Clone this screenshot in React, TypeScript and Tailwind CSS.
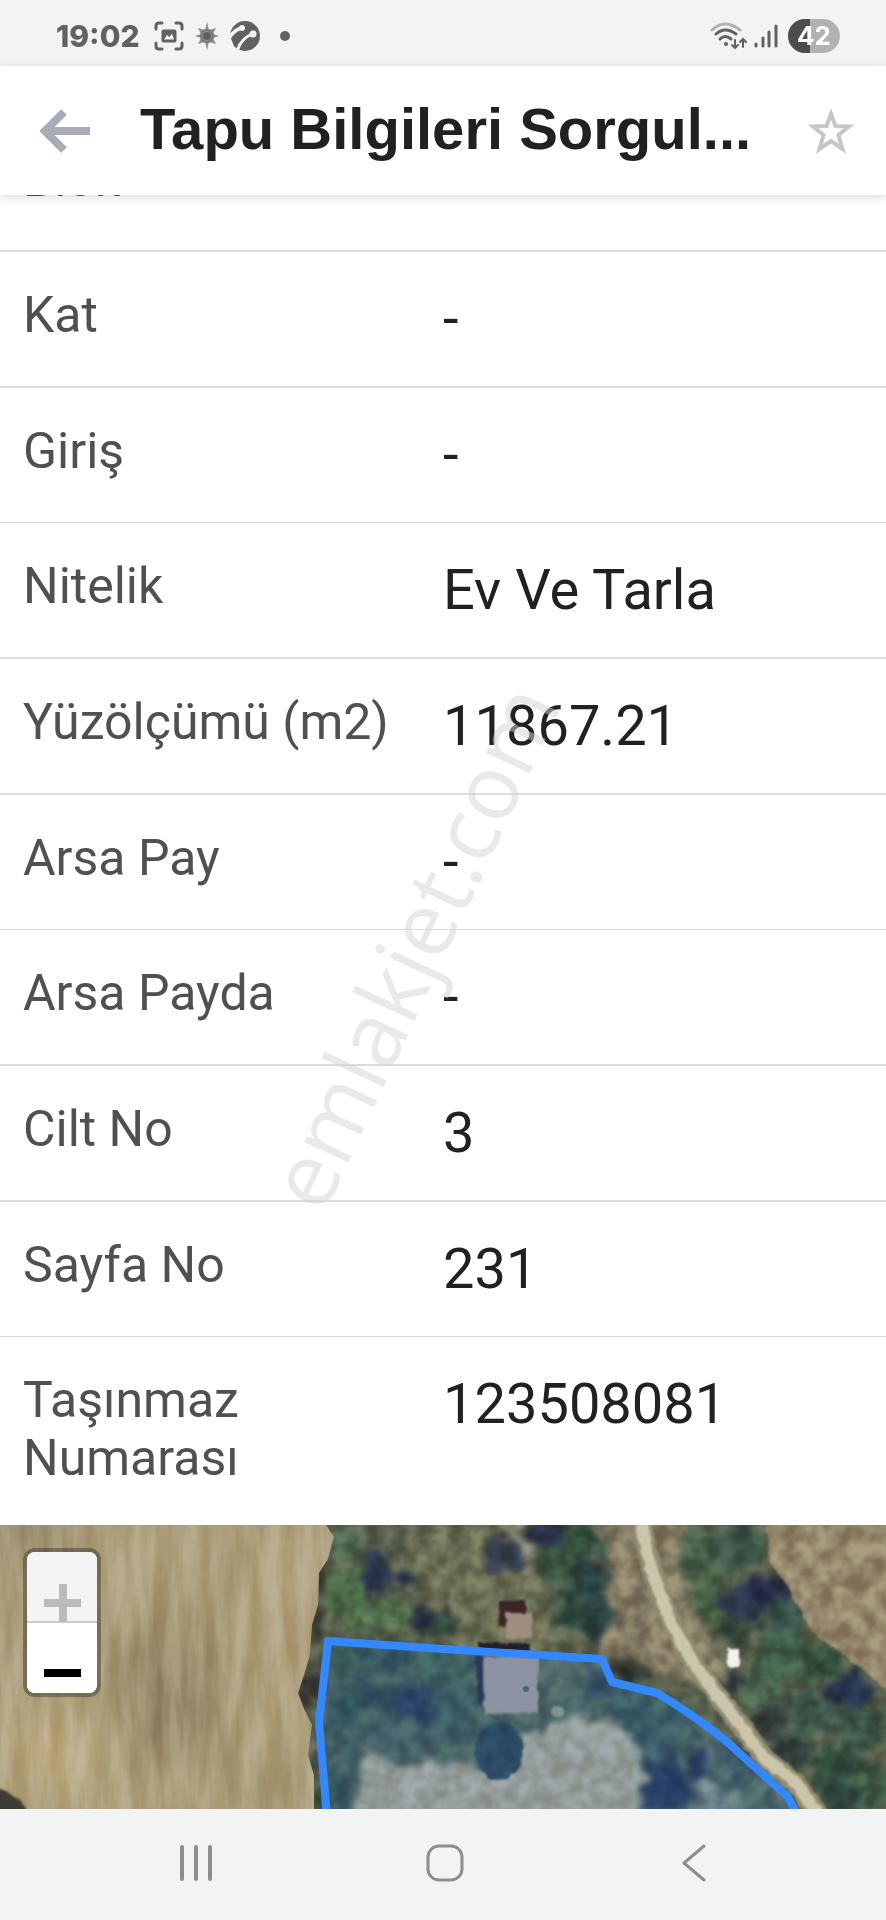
interface Row {
  label: string
  value: string
}

const rows: Row[] = [
  { label: 'Blok', value: '' },
  { label: 'Kat', value: '-' },
  { label: 'Giriş', value: '-' },
  { label: 'Nitelik', value: 'Ev Ve Tarla' },
  { label: 'Yüzölçümü (m2)', value: '11867.21' },
  { label: 'Arsa Pay', value: '-' },
  { label: 'Arsa Payda', value: '-' },
  { label: 'Cilt No', value: '3' },
  { label: 'Sayfa No', value: '231' },
  { label: 'Taşınmaz Numarası', value: '123508081' },
]

// [cx, cy, rx, ry, fill]
type Blob = [number, number, number, number, string]

const trees: Blob[] = [
  [345, 20, 16, 18, '#4d6650'],
  [348, 70, 22, 26, '#4a6a45'],
  [375, 48, 14, 24, '#28344c'],
  [402, 56, 12, 9, '#28344c'],
  [420, 95, 12, 14, '#25303f'],
  [405, 9, 6, 5, '#2f3834'],
  [365, 98, 22, 12, '#547050'],
  [395, 88, 18, 14, '#52704a'],
  [445, 98, 14, 14, '#34483c'],
  [505, 32, 20, 18, '#343e4c'],
  [548, 10, 20, 18, '#2a3146'],
  [580, 14, 22, 20, '#35503f'],
  [565, 42, 26, 22, '#37523f'],
  [590, 55, 20, 26, '#2c4444'],
  [572, 85, 20, 20, '#30483e'],
  [598, 95, 18, 20, '#2b4240'],
  [322, 55, 5, 22, '#3a332f'],
  [318, 100, 8, 22, '#37352f'],
  [312, 165, 14, 18, '#33322f'],
  [316, 240, 6, 16, '#3a4636'],
  [318, 270, 7, 16, '#3c5038'],
  [700, 30, 22, 30, '#48604a'],
  [738, 20, 26, 28, '#3d5446'],
  [712, 75, 20, 26, '#4a6346'],
  [770, 68, 24, 16, '#272c49'],
  [740, 82, 22, 20, '#2a3548'],
  [785, 92, 24, 16, '#38534a'],
  [735, 105, 14, 14, '#324438'],
  [785, 130, 28, 24, '#3f5e48'],
  [760, 165, 20, 22, '#4a6650'],
  [820, 138, 22, 18, '#34503c'],
  [850, 165, 24, 18, '#27334a'],
  [770, 195, 18, 16, '#333a3a'],
  [810, 190, 26, 22, '#3b5346'],
  [860, 205, 26, 22, '#3c5647'],
  [790, 225, 20, 16, '#323f3c'],
  [835, 240, 28, 20, '#33503f'],
  [875, 262, 22, 24, '#3f5c45'],
  [840, 272, 22, 14, '#2a3f3a'],
  [732, 158, 8, 12, '#232a33'],
  [630, 140, 26, 9, '#33362f'],
  [640, 152, 20, 8, '#2e3433'],
]

const parcelTrees: Blob[] = [
  [350, 135, 22, 18, '#3d5532'],
  [395, 130, 32, 14, '#33483a'],
  [440, 140, 34, 18, '#40583a'],
  [380, 170, 30, 18, '#303e34'],
  [420, 178, 26, 18, '#283440'],
  [345, 190, 20, 20, '#344c38'],
  [455, 180, 26, 20, '#3f5540'],
  [350, 225, 12, 26, '#44573f'],
  [340, 262, 12, 22, '#364a36'],
  [395, 208, 36, 12, '#485744'],
  [450, 212, 26, 12, '#445140'],
  [560, 150, 26, 22, '#576448'],
  [600, 160, 10, 20, '#343f40'],
  [630, 178, 24, 18, '#3d533f'],
  [655, 205, 30, 22, '#3b4f41'],
  [675, 190, 22, 16, '#425744'],
  [648, 232, 16, 18, '#425545'],
  [665, 262, 24, 28, '#242e40'],
  [699, 245, 9, 17, '#262c3a'],
  [720, 225, 20, 14, '#4f5a4a'],
  [735, 262, 30, 16, '#526148'],
  [745, 240, 18, 12, '#3b493f'],
]

function Blobs({ items }: { items: Blob[] }) {
  return (
    <>
      {items.map(([cx, cy, rx, ry, fill], i) => (
        <ellipse key={i} cx={cx} cy={cy} rx={rx} ry={ry} fill={fill} />
      ))}
    </>
  )
}

const parcel = 'M327 292L319 197L328 116L443 124L602 134L612 157L657 168Q694 190 725 215L788 272L798 292'
const road = 'M641 -6Q648 42 667 88Q684 128 711 162L744 205L764 233L794 256L820 292'

function SatelliteMap() {
  return (
    <svg viewBox="0 0 886 284" preserveAspectRatio="xMidYMid slice" className="absolute inset-0 w-full h-full" aria-hidden="true">
      <defs>
        <filter id="rough" x="-5%" y="-5%" width="110%" height="110%" colorInterpolationFilters="sRGB">
          <feTurbulence type="fractalNoise" baseFrequency="0.06" numOctaves="3" seed="4" result="n" />
          <feDisplacementMap in="SourceGraphic" in2="n" scale="30" xChannelSelector="R" yChannelSelector="G" />
          <feGaussianBlur stdDeviation="3" />
        </filter>
        <filter id="edge" colorInterpolationFilters="sRGB">
          <feTurbulence type="fractalNoise" baseFrequency="0.12" numOctaves="2" seed="9" result="n" />
          <feDisplacementMap in="SourceGraphic" in2="n" scale="5" xChannelSelector="R" yChannelSelector="G" />
          <feGaussianBlur stdDeviation="1" />
        </filter>
        <filter id="grain" x="0" y="0" width="100%" height="100%" colorInterpolationFilters="sRGB">
          <feTurbulence type="fractalNoise" baseFrequency="0.06" numOctaves="3" seed="2" />
          <feColorMatrix values="2.4 0 0 0 -0.7  2.4 0 0 0 -0.7  2.4 0 0 0 -0.7  0 0 0 0 1" />
          <feGaussianBlur stdDeviation="1" />
        </filter>
        <filter id="streaks" x="0" y="0" width="100%" height="100%" colorInterpolationFilters="sRGB">
          <feTurbulence type="fractalNoise" baseFrequency="0.06 0.01" numOctaves="4" seed="7" />
          <feColorMatrix values="2.2 0 0 0 -0.6  2.2 0 0 0 -0.6  2.2 0 0 0 -0.6  0 0 0 0 1" />
        </filter>
        <filter id="soft">
          <feGaussianBlur stdDeviation="18" />
        </filter>
        <clipPath id="fieldClip">
          <path d="M0 0H326L334 12L328 34L319 48L318 80L312 100L310 130L304 150L298 168L304 184L312 200L308 230L314 250V284H0Z" />
        </clipPath>
      </defs>

      <rect width="886" height="284" fill="#5a624e" />

      <g filter="url(#rough)">
        <path d="M395 0H520L540 60L560 140H440L425 60Z" fill="#6c6e54" />
        <path d="M600 -10H680L700 90L730 150L700 160L600 130Z" fill="#857c64" />
        <path d="M495 -5L520 -5L535 45L525 50Z" fill="#8f8d7b" />
        <Blobs items={trees} />
      </g>

      {/* Right field */}
      <path d="M766 -5L770 38L790 65L813 108L860 142L890 168V-5Z" fill="#93866a" filter="url(#edge)" />

      {/* Parcel ground */}
      <g filter="url(#rough)">
        <path d="M328 122L602 138L612 160L657 172L725 219L785 284H327L321 200Z" fill="#4c5a3f" />
        <Blobs items={parcelTrees} />
        <path d="M362 220L400 240L443 236L480 240L535 206L560 190L600 190L628 210L648 245L640 295H358Z" fill="#aca282" />
        <path d="M700 262L730 262L750 290H690Z" fill="#77806a" />
      </g>
      <g filter="url(#edge)">
        <ellipse cx="499" cy="226" rx="24" ry="29" fill="#2b3d3f" />
        <circle cx="558" cy="186" r="6" fill="#9a9a88" />
      </g>

      <rect width="886" height="284" filter="url(#grain)" className="mix-blend-overlay opacity-20" />

      {/* Left field */}
      <g clipPath="url(#fieldClip)">
        <rect width="340" height="284" fill="#ac9e7b" />
        <g filter="url(#soft)">
          <ellipse cx="170" cy="170" rx="50" ry="80" fill="#988a6b" />
          <ellipse cx="60" cy="230" rx="50" ry="40" fill="#bba980" />
          <ellipse cx="285" cy="120" rx="20" ry="130" fill="#b3a17e" />
          <ellipse cx="20" cy="10" rx="60" ry="20" fill="#948769" />
        </g>
        <rect width="340" height="284" filter="url(#streaks)" className="mix-blend-overlay opacity-15" />
        <path d="M-5 262Q18 268 30 290H-5Z" fill="#3e3b35" filter="url(#edge)" />
      </g>

      {/* Road */}
      <g fill="none" filter="url(#edge)">
        <path d={road} stroke="#918b70" strokeWidth="20" />
        <path d={road} stroke="#cbc6ab" strokeWidth="12" />
      </g>

      {/* Buildings */}
      <g filter="url(#edge)">
        <path d="M499 76H526V90H508V102H499Z" fill="#3a2428" />
        <path d="M506 88H532V114H506Z" fill="#a08d80" />
        <path d="M478 118H530V128H478Z" fill="#231f26" />
        <path d="M475 130H483V178H478Z" fill="#232733" />
        <path d="M483 132H538V188L484 190Z" fill="#a3958a" />
        <path d="M727 124H739V142H728Z" fill="#f4f2ee" />
      </g>
      <circle cx="526" cy="164" r="3" fill="#5a5560" />

      <path d={parcel} fill="#3388ff" fillOpacity="0.2" stroke="#3388ff" strokeWidth="8" strokeLinejoin="round" />
    </svg>
  )
}

function StatusBar() {
  return (
    <div className="h-[66px] shrink-0 bg-[#f2f3f5] flex items-center justify-between pl-14 pr-[46px] pt-[6px]">
      <div className="flex items-center text-[#5f6163]">
        <span className="w-[98px] font-['Inter'] font-extrabold text-[30px] leading-[32px]">19:02</span>
        <svg width="30" height="30" viewBox="0 0 30 30" fill="none" stroke="currentColor" strokeWidth="3" strokeLinecap="round">
          <path d="M2 8V5Q2 2 5 2H8M22 2H25Q28 2 28 5V8M28 22V25Q28 28 25 28H22M8 28H5Q2 28 2 25V22" />
          <rect x="7.500" y="8.500" width="15" height="13" rx="2" fill="currentColor" stroke="none" />
          <path d="M10 18.500L13 14L15.500 16L18 12.500L20 18.500Z" fill="#f2f3f5" stroke="none" />
        </svg>
        <svg width="26" height="30" viewBox="0 0 26 30" className="ml-[10px]">
          <path d="M13 1L15 9L22 7L19 13L25 15L19 17L22 23L15 21L13 29L11 21L4 23L7 17L1 15L7 13L4 7L11 9Z" fill="#8d8f91" />
          <circle cx="13" cy="15" r="6" fill="none" stroke="#77797b" strokeWidth="2" />
          <circle cx="13" cy="15" r="4" fill="#5f6163" />
        </svg>
        <svg width="30" height="30" viewBox="0 0 30 30" className="ml-[10px]">
          <circle cx="15" cy="15" r="15" fill="currentColor" />
          <g fill="none" stroke="#f2f3f5" strokeLinecap="round">
            <path d="M-1 17Q3 10 11 7" strokeWidth="4" />
            <path d="M8 28Q11 18 22 13" strokeWidth="3" />
            <path d="M0 19L2 24" strokeWidth="3" />
          </g>
          <circle cx="12" cy="7" r="3" fill="#f2f3f5" />
          <circle cx="23" cy="13" r="3.500" fill="#f2f3f5" />
        </svg>
        <span className="ml-5 w-[10px] h-[10px] rounded-full bg-[#5f6163]" />
      </div>

      <div className="flex items-center">
        <svg width="38" height="30" viewBox="0 0 38 30" fill="none" strokeLinecap="round">
          <path d="M2 9Q15 -3 30 9" stroke="#b0b1b3" strokeWidth="3" />
          <path d="M6 13Q15 5 26 13M10 18Q15 13 21 18" stroke="#5f6163" strokeWidth="3" />
          <circle cx="16" cy="23" r="2" fill="#5f6163" />
          <path d="M25 19V27M22 24L25 27L28 24M33 26V18M30 21L33 18L36 21" stroke="#5f6163" strokeWidth="2" />
        </svg>
        <svg width="24" height="26" viewBox="0 0 24 26" className="ml-[6px]" stroke="#5f6163" strokeWidth="3" strokeLinecap="round">
          <path d="M2 21V23M9 15V23M15 9V23M22 3V23" />
        </svg>
        <div className="relative ml-[10px] w-[52px] h-[34px] rounded-full overflow-hidden bg-[#b0b1b3] flex items-center justify-center">
          <div className="absolute left-0 inset-y-0 w-[42%] bg-[#4b4d50]" />
          <span className="relative font-['Inter'] font-bold text-[26px] leading-[34px] text-white">42</span>
        </div>
      </div>
    </div>
  )
}

export default function App() {
  return (
    <div className="relative min-h-screen flex flex-col bg-white overflow-hidden font-['Roboto',sans-serif]">
      <StatusBar />

      <header className="relative z-10 h-[129px] shrink-0 flex items-center bg-white pl-10 pr-[32px] shadow-[0_2px_10px_rgba(0,0,0,0.15)]">
        <button aria-label="Geri" className="w-[50px] h-[44px] shrink-0">
          <svg width="50" height="44" viewBox="0 0 50 44" fill="none" stroke="#a8acb8" strokeWidth="8">
            <path d="M50 22H7M24 3L5 22L24 41" />
          </svg>
        </button>
        <h1 className="flex-1 min-w-0 ml-[50px] pb-1 truncate font-['Liberation_Sans',sans-serif] font-bold text-[58px] leading-[72px] text-[#212121]">
          Tapu Bilgileri Sorgul...
        </h1>
        <button aria-label="Favorilere ekle" className="w-[46px] h-[46px] shrink-0">
          <svg width="46" height="46" viewBox="0 0 46 46" fill="none" stroke="#c4c6c8" strokeWidth="4">
            <path d="M23 6L27.500 18L41 18.500L30.500 27L34.500 41L23 33L11.500 41L15.500 27L5 18.500L18.500 18Z" />
          </svg>
        </button>
      </header>

      {/* Scrolled list, first row sits half under the header */}
      <main className="flex-1 flex flex-col overflow-hidden">
        <dl className="-mt-[79px]">
          {rows.map(row => (
            <div
              key={row.label}
              className="grid grid-cols-2 pt-[34px] pb-[34px] last:pb-[38px] border-b-2 border-[#dcdcdc] nth-[3n]:border-b last:border-b-0"
            >
              <dt className="pl-[23px] pr-6 text-[50px] leading-[58px] text-[#505050]">{row.label}</dt>
              <dd className="min-h-[66px] text-[56px] leading-[66px] text-[#212121]">{row.value}</dd>
            </div>
          ))}
        </dl>

        <section aria-label="Harita" className="relative flex-1 min-h-[284px] overflow-hidden">
          <SatelliteMap />
          <div className="absolute left-[23px] top-[23px] w-[78px] flex flex-col rounded-xl border-4 border-black/30 bg-clip-padding bg-white overflow-hidden">
            <button aria-label="Yakınlaştır" className="h-[71px] bg-[#f4f4f4] border-b-2 border-[#cccccc]">
              <svg width="70" height="70" viewBox="0 0 70 70" fill="#bbbbbb">
                <path d="M32 32H40V47H54V55H40V70H32V55H17V47H32Z" />
              </svg>
            </button>
            <button aria-label="Uzaklaştır" className="h-[70px] bg-white">
              <svg width="70" height="70" viewBox="0 0 70 70" fill="#000000">
                <path d="M17 46H54V54H17Z" />
              </svg>
            </button>
          </div>
        </section>
      </main>

      <nav className="h-[111px] shrink-0 grid grid-cols-3 pl-[72px] pr-[68px] pb-[3px] bg-[#f2f3f5] text-[#8e8e90]">
        <button aria-label="Son uygulamalar" className="flex items-center justify-center">
          <svg width="36" height="36" viewBox="0 0 36 36" stroke="currentColor" strokeWidth="4" strokeLinecap="round">
            <path d="M4 2V34M18 2V34M32 2V34" />
          </svg>
        </button>
        <button aria-label="Ana ekran" className="flex items-center justify-center">
          <svg width="38" height="38" viewBox="0 0 38 38" fill="none" stroke="currentColor" strokeWidth="3">
            <rect x="2" y="2" width="34" height="34" rx="11" />
          </svg>
        </button>
        <button aria-label="Geri dön" className="flex items-center justify-center">
          <svg width="24" height="38" viewBox="0 0 24 38" fill="none" stroke="currentColor" strokeWidth="3" strokeLinecap="round" strokeLinejoin="round">
            <path d="M22 2L2 19L22 36" />
          </svg>
        </button>
      </nav>

      {/* Watermark */}
      <div className="absolute inset-0 z-20 flex items-center justify-center pointer-events-none">
        <span className="-rotate-65 pb-[70px] font-['Open_Sans'] text-[90px] leading-[90px] text-[#d4d4d4]/50">emlakjet.com</span>
      </div>
    </div>
  )
}
